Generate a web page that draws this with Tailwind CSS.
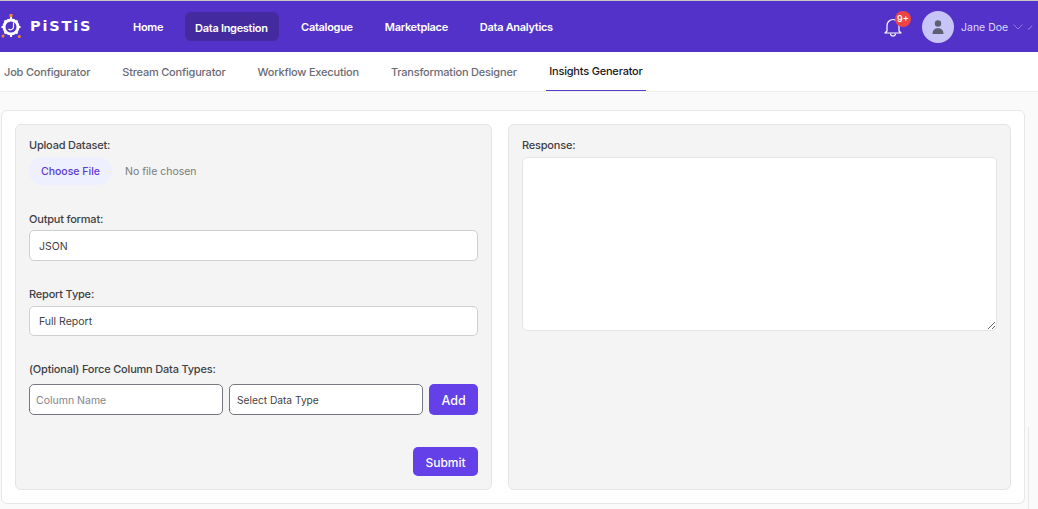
<!DOCTYPE html>
<html>
  <head>
    <meta charset="utf-8" />
    <title>Insights Generator</title>
    <script src="https://cdn.jsdelivr.net/npm/@tailwindcss/browser@4"></script>
  </head>
  <body class="relative h-[509px] w-[1038px] overflow-hidden bg-[#fafafa] font-['Inter',sans-serif] text-[#3f3f46]">
    <div class="h-px bg-[#c9c7c2]"></div>

    <!-- top nav -->
    <header class="flex h-[51px] items-center bg-[#5332c9] text-white">
      <div class="flex w-[123px] shrink-0 items-center">
        <svg class="ml-px shrink-0" width="28" height="34" viewBox="0 0 28 34" fill="none">
          <circle cx="10" cy="17" r="7" stroke="#fff" stroke-width="3" />
          <path d="M10 7v3M10 24v3M0.500 17h2.500M17 17h2.500M3.500 10.500l2 2M16.500 10.500l-2 2M3.500 23.500l2-2M16.500 23.500l-2-2" stroke="#fff" stroke-width="2" />
          <path d="M12.500 12.500v4.500a3 3 0 0 1-5 2" stroke="#fff" stroke-width="1.200" />
          <rect x="8.500" y="4" width="3" height="3" fill="#f58a2e" />
          <circle cx="2" cy="26" r="1.500" fill="#f58a2e" />
          <circle cx="18.300" cy="26.500" r="1.500" fill="#f58a2e" />
        </svg>
        <span class="ml-px font-['DejaVu_Sans',sans-serif] text-[14.500px] leading-none font-bold tracking-[1.800px]">PiSTiS</span>
      </div>
      <nav class="flex items-center gap-3 text-[11px] font-semibold tracking-[-0.300px] whitespace-nowrap">
        <a class="px-[10px] pt-[8px] pb-[6px]">Home</a>
        <a class="h-[29px] w-[94px] rounded-md bg-[#432a9f] px-[10px] pt-[8px] pb-[6px]">Data Ingestion</a>
        <a class="px-[10px] pt-[8px] pb-[6px]">Catalogue</a>
        <a class="px-[10px] pt-[8px] pb-[6px]">Marketplace</a>
        <a class="px-[10px] pt-[8px] pb-[6px]">Data Analytics</a>
      </nav>
      <div class="ml-auto flex items-center">
        <div class="relative mr-[20px] h-5 w-[18px]">
          <svg width="18" height="20" viewBox="0 0 18 20" fill="none" stroke="#fff" stroke-width="1.200" stroke-linejoin="round">
            <path d="M3 14V8.500a6 6 0 0 1 12 0V14l2 2H1z" />
            <path d="M6.500 16.500a2.500 2.500 0 0 0 5 0" />
          </svg>
          <span class="absolute top-[-6px] left-[11px] flex h-4 w-4 items-center justify-center rounded-full bg-[#ef4444] text-[9px] font-semibold">9+</span>
        </div>
        <div class="flex h-8 w-8 items-center justify-center rounded-full bg-[#c7c5f7]">
          <svg width="16" height="16" viewBox="0 0 16 16" fill="#5f5f73">
            <circle cx="8" cy="4.500" r="3.200" />
            <path d="M2.500 15c0-4 2.200-5.800 5.500-5.800s5.500 1.800 5.500 5.800z" />
          </svg>
        </div>
        <span class="ml-[7px] w-[45px] pt-[2px] text-[10.500px] whitespace-nowrap text-[#dcdcff]">Jane Doe</span>
        <svg class="mr-[5px] ml-[7px]" width="20" height="6" viewBox="0 0 20 6" fill="none" stroke="#8f7fdc" stroke-width="1">
          <path d="M0.500 0.500 5 5l4.500-4.500M15 4.500l1 0.800 3-3.800" />
        </svg>
      </div>
    </header>

    <!-- tabs -->
    <div class="flex h-10 items-stretch gap-[30px] border-b border-[#eeeeee] bg-white px-[3px] pt-px text-[11px] font-medium tracking-[-0.200px] text-[#6b6b76]">
      <a class="flex items-center px-px">Job Configurator</a>
      <a class="flex items-center px-px">Stream Configurator</a>
      <a class="flex items-center px-px">Workflow Execution</a>
      <a class="flex items-center px-px">Transformation Designer</a>
      <a class="relative z-10 -ml-[2px] flex items-center border-b border-[#5b3bd6] px-[3.500px] pb-px text-[#18181b]">Insights Generator</a>
    </div>

    <!-- content -->
    <main class="mt-[18px] ml-px flex h-[394px] w-[1024px] gap-4 rounded-md border border-[#e7e7e7] bg-white p-[13px]">
      <section class="flex w-[477px] shrink-0 flex-col rounded-md border border-[#e4e4e4] bg-[#f4f4f4] px-[13px] pt-[13px]">
        <label class="h-[19px] text-[11px] leading-[14px] font-medium tracking-[-0.200px]">Upload Dataset:</label>
        <div class="flex h-[28px] items-center text-[10.500px]">
          <span class="flex h-[28px] w-[83px] items-center justify-center rounded-full bg-[#eef0ff] pt-px font-medium text-[#5b3bd6]">Choose File</span>
          <span class="ml-[13px] pt-px text-[#7a7a7a]">No file chosen</span>
        </div>

        <label class="mt-[27px] h-[18px] text-[11px] leading-[14px] font-medium tracking-[-0.200px]">Output format:</label>
        <input class="h-[31px] w-full rounded-[5px] border border-[#cfcfcf] bg-white px-[9px] pt-[2px] text-[10.500px]" value="JSON" readonly />

        <label class="mt-[26px] h-[19px] text-[11px] leading-[14px] font-medium tracking-[-0.200px]">Report Type:</label>
        <input class="h-[30px] w-full rounded-[5px] border border-[#cfcfcf] bg-white px-[9px] text-[10.500px]" value="Full Report" readonly />

        <label class="mt-[26px] h-[22px] text-[11px] leading-[14px] font-medium tracking-[-0.200px]">(Optional) Force Column Data Types:</label>
        <div class="flex h-[31px] gap-[6px]">
          <input class="w-[194px] rounded-[5px] border border-[#77777f] bg-white px-[6px] pt-[2px] text-[10.500px] placeholder:text-[#85858c]" placeholder="Column Name" />
          <input class="w-[194px] rounded-[5px] border border-[#77777f] bg-white px-[7px] pt-[2px] text-[10.200px]" value="Select Data Type" readonly />
          <button class="w-[49px] rounded-[5px] bg-[#6340e8] pt-[3px] text-[12.500px] font-medium text-white">Add</button>
        </div>

        <div class="mt-[32px] flex justify-end">
          <button class="h-[29px] w-[65px] rounded-[5px] bg-[#6340e8] pt-[3px] text-[12px] font-medium text-white">Submit</button>
        </div>
      </section>

      <section class="flex w-[503px] shrink-0 flex-col rounded-md border border-[#e4e4e4] bg-[#f4f4f4] px-[13px] pt-[13px]">
        <label class="h-[19px] text-[11px] leading-[14px] font-medium tracking-[-0.200px]">Response:</label>
        <textarea class="h-[174px] w-[475px] rounded-[5px] border border-[#e4e4e4] bg-white"></textarea>
      </section>
    </main>

    <div class="absolute top-[427px] left-[1028px] h-[82px] w-px bg-[#e8e8e8]"></div>
  </body>
</html>
